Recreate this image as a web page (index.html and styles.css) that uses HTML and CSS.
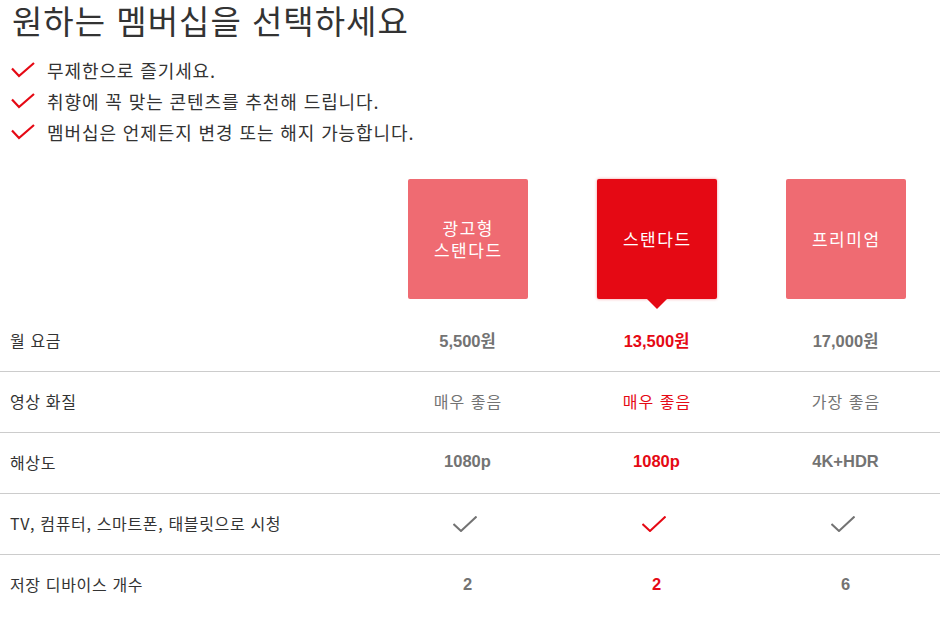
FILE: index.html
```html
<!DOCTYPE html>
<html lang="ko">
<head>
<meta charset="utf-8">
<title>멤버십 선택</title>
<link rel="stylesheet" href="styles.css">
</head>
<body>
<div class="page">
  <h1 class="title">원하는 멤버십을 선택하세요</h1>
  <ul class="benefits">
    <li class="benefit"><svg class="benefit-check" viewBox="0 0 24 16" width="24" height="16"><path d="M1 6.5 L8 14 L23 1" fill="none" stroke="#e50914" stroke-width="2.2"/></svg><span>무제한으로 즐기세요.</span></li>
    <li class="benefit"><svg class="benefit-check" viewBox="0 0 24 16" width="24" height="16"><path d="M1 6.5 L8 14 L23 1" fill="none" stroke="#e50914" stroke-width="2.2"/></svg><span>취향에 꼭 맞는 콘텐츠를 추천해 드립니다.</span></li>
    <li class="benefit"><svg class="benefit-check" viewBox="0 0 24 16" width="24" height="16"><path d="M1 6.5 L8 14 L23 1" fill="none" stroke="#e50914" stroke-width="2.2"/></svg><span>멤버십은 언제든지 변경 또는 해지 가능합니다.</span></li>
  </ul>

  <div class="plans">
    <div class="plan-row plan-head">
      <div class="cell label"></div>
      <div class="cell"><div class="plan-box">광고형<br>스탠다드</div></div>
      <div class="cell"><div class="plan-box selected">스탠다드</div></div>
      <div class="cell"><div class="plan-box">프리미엄</div></div>
    </div>
    <div class="plan-row">
      <div class="cell label">월 요금</div>
      <div class="cell value bold">5,500원</div>
      <div class="cell value bold red">13,500원</div>
      <div class="cell value bold">17,000원</div>
    </div>
    <div class="plan-row">
      <div class="cell label">영상 화질</div>
      <div class="cell value wide">매우 좋음</div>
      <div class="cell value wide red">매우 좋음</div>
      <div class="cell value wide">가장 좋음</div>
    </div>
    <div class="plan-row">
      <div class="cell label">해상도</div>
      <div class="cell value bold">1080p</div>
      <div class="cell value bold red">1080p</div>
      <div class="cell value bold">4K+HDR</div>
    </div>
    <div class="plan-row">
      <div class="cell label">TV, 컴퓨터, 스마트폰, 태블릿으로 시청</div>
      <div class="cell value"><svg class="tick" viewBox="0 0 24 16" width="24" height="16"><path d="M0.5 8 L8 15 L23.5 0.5" fill="none" stroke="#737373" stroke-width="2"/></svg></div>
      <div class="cell value"><svg class="tick" viewBox="0 0 24 16" width="24" height="16"><path d="M0.5 8 L8 15 L23.5 0.5" fill="none" stroke="#e50914" stroke-width="2"/></svg></div>
      <div class="cell value"><svg class="tick" viewBox="0 0 24 16" width="24" height="16"><path d="M0.5 8 L8 15 L23.5 0.5" fill="none" stroke="#737373" stroke-width="2"/></svg></div>
    </div>
    <div class="plan-row last">
      <div class="cell label">저장 디바이스 개수</div>
      <div class="cell value bold">2</div>
      <div class="cell value bold red">2</div>
      <div class="cell value bold">6</div>
    </div>
  </div>
</div>
</body>
</html>
```
FILE: styles.css
```css
* { box-sizing: border-box; }

html, body {
  margin: 0;
  padding: 0;
  background: #fff;
}

body {
  font-family: "Noto Sans CJK KR", "Noto Sans", sans-serif;
  color: #333;
}

.page {
  width: 940px;
}

.title {
  margin: 0;
  padding-left: 12px;
  font-size: 33px;
  font-weight: 400;
  line-height: 40px;
  letter-spacing: 1px;
  color: #333;
}

.benefits {
  list-style: none;
  margin: 0;
  padding: 14px 0 0 11px;
}

.benefit {
  display: flex;
  align-items: center;
  gap: 12px;
  height: 31px;
  font-size: 18px;
  letter-spacing: 0.9px;
  color: #333;
}

.benefit-check {
  flex: none;
}

.plans {
  margin-top: 32px;
}

.plan-row {
  display: grid;
  grid-template-columns: 373px repeat(3, 189px);
  height: 61px;
  border-bottom: 1px solid #ccc;
}

.plan-row.plan-head {
  height: 132px;
  border-bottom: none;
  align-items: start;
}

.plan-row.last {
  border-bottom: none;
}

.cell {
  display: flex;
  align-items: center;
  justify-content: center;
  font-size: 16px;
  padding-bottom: 3px;
}

.plan-head .cell {
  align-items: flex-start;
  padding-bottom: 0;
}

.cell.label {
  justify-content: flex-start;
  padding-left: 10px;
  color: #333;
  font-size: 16px;
  letter-spacing: 0.65px;
}

.value {
  color: #737373;
  font-family: "Liberation Sans", "Noto Sans CJK KR", sans-serif;
}

.value.wide {
  letter-spacing: 1px;
  padding-left: 1px;
}

.value.bold {
  font-weight: 700;
  font-size: 16.5px;
}

.value.red {
  color: #e50914;
}

.tick {
  margin-right: 5px;
  margin-top: 2px;
}

.plan-box {
  position: relative;
  width: 120px;
  height: 120px;
  border-radius: 2px;
  background: #ef6b72;
  color: #fff;
  font-size: 17px;
  line-height: 22px;
  letter-spacing: 1.5px;
  padding-left: 1.5px;
  display: flex;
  align-items: center;
  justify-content: center;
  text-align: center;
}

.plan-box.selected {
  background: #e50914;
  box-shadow: 0 0 3px rgba(229, 9, 20, 0.45);
}

.plan-box.selected::after {
  content: "";
  position: absolute;
  left: 50%;
  bottom: -10px;
  margin-left: -10px;
  border-left: 10px solid transparent;
  border-right: 10px solid transparent;
  border-top: 10px solid #e50914;
}
```
